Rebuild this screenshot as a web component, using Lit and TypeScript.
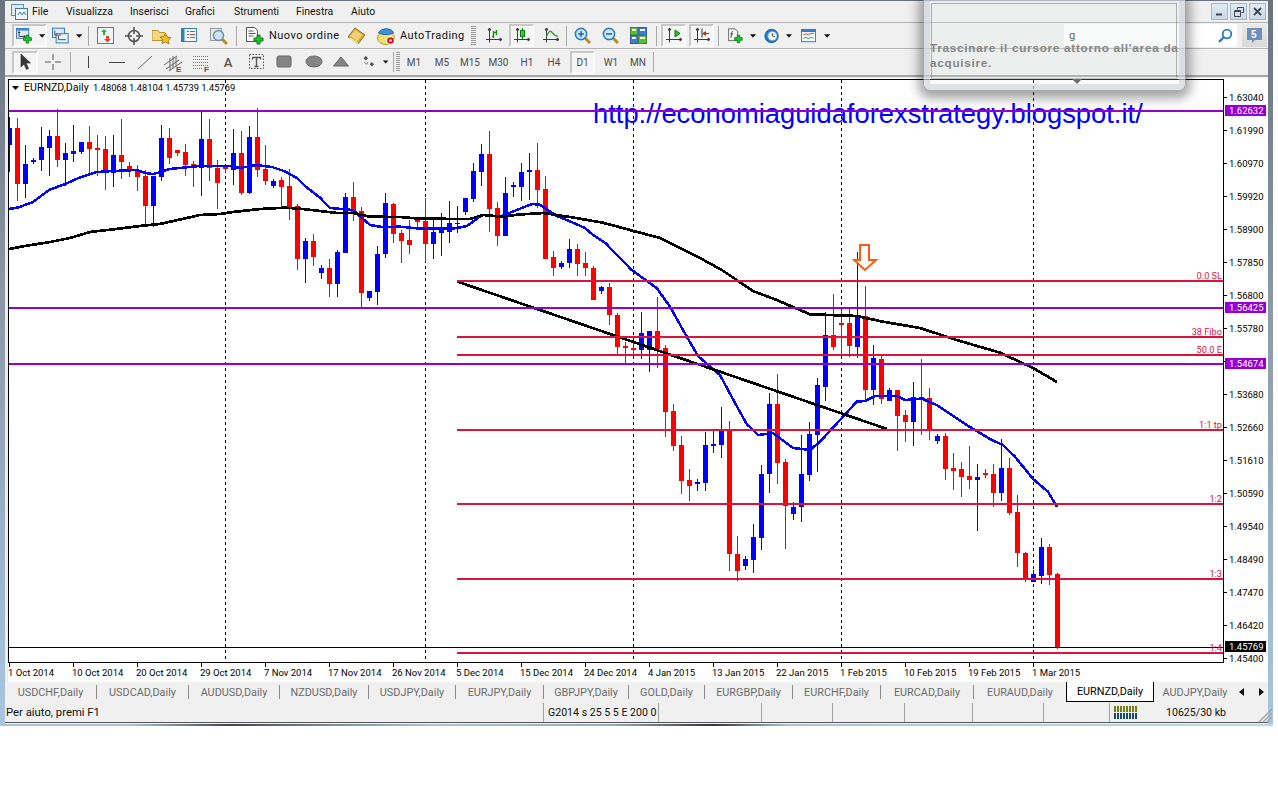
import { LitElement, html, svg, css } from "lit";
import { customElement } from "lit/decorators.js";

type C = [number, number, number, number, string];
const A: C[] = [[50,84,135,215,"b"],[54,84,251,302,"r"],[135,192,251,294,"b"],[174,180,186,191,"b"],[81,141,180,213,"b"],[90,108,144,228,"b"],[27,108,180,201,"r"],[129,159,180,258,"b"],[75,153,162,186,"b"],[126,126,156,162,"b"],[78,126,147,222,"r"],[105,144,150,228,"r"],[108,147,219,270,"r"],[105,165,219,261,"b"],[57,165,186,237,"r"],[186,198,210,231,"r"],[195,210,231,273,"r"],[210,228,318,378,"r"],[228,228,318,381,"b"],[75,114,231,243,"b"],[84,114,174,192,"r"],[150,150,159,168,"r"],[132,156,195,228,"r"],[183,192,198,261,"r"],[36,117,204,288,"b"],[57,117,204,243,"r"],[180,204,249,327,"r"],[195,201,207,216,"r"],[87,159,210,255,"b"],[93,159,279,285,"r"],[78,111,279,282,"b"],[24,111,210,231,"r"],[135,207,243,255,"r"],[237,243,258,264,"b"],[231,240,261,324,"r"],[207,258,324,360,"r"],[312,318,477,510,"r"],[414,423,477,549,"b"],[402,423,471,498,"r"]];
const B: C[] = [[495,504,519,537,"b"],[477,504,552,591,"r"],[450,456,552,591,"b"],[279,291,459,459,"b"],[246,291,336,363,"r"],[321,333,579,621,"r"],[573,573,594,603,"b"],[438,462,576,615,"b"],[279,309,462,474,"b"],[309,312,402,429,"r"],[390,399,423,489,"r"],[360,420,435,462,"r"],[354,357,366,384,"r"],[294,363,432,486,"r"],[351,396,432,477,"b"],[339,387,399,468,"b"],[303,369,396,429,"b"],[318,369,372,399,"b"],[294,294,336,345,"b"],[189,213,297,306,"b"],[132,162,216,258,"b"],[93,162,327,396,"r"],[306,324,408,438,"r"],[231,279,408,408,"b"],[246,255,261,291,"b"],[189,216,261,303,"b"],[159,210,216,300,"b"],[129,210,270,324,"r"],[228,267,477,477,"r"],[453,471,504,528,"r"],[483,489,501,507,"b"],[417,447,489,504,"b"],[432,447,492,528,"r"],[456,489,504,528,"r"],[498,504,600,600,"r"],[558,561,573,582,"b"],[549,561,645,675,"r"],[639,645,741,765,"r"]];
const D: C[] = [[216,228,234,282,"r"],[219,234,240,255,"r"],[126,189,240,267,"b"],[183,183,240,306,"b"],[81,183,237,294,"r"],[225,234,426,501,"r"],[402,423,528,543,"r"],[498,525,633,672,"r"],[597,630,648,693,"r"],[627,636,642,663,"b"],[486,525,639,663,"b"],[483,522,528,549,"b"],[411,483,525,564,"b"],[453,480,852,903,"r"],[798,852,903,933,"r"],[858,867,888,900,"b"],[762,801,870,909,"b"],[585,612,804,840,"b"],[369,402,612,669,"b"],[312,402,579,642,"r"],[567,576,708,837,"r"],[696,711,732,750,"b"],[495,612,711,756,"b"],[456,492,615,633,"b"],[324,345,495,606,"b"],[126,195,351,393,"b"],[72,195,231,240,"r"],[120,159,165,258,"r"],[117,159,228,261,"r"],[-54,138,231,264,"b"],[48,138,360,390,"r"],[225,264,360,405,"b"],[258,267,387,402,"r"],[354,360,393,393,"b"],[360,360,438,543,"r"]];
const E: C[] = [[210,225,246,306,"r"],[126,171,246,318,"b"],[57,171,177,285,"r"],[144,174,270,300,"r"],[282,288,303,312,"b"],[279,288,387,420,"r"],[339,384,393,450,"r"],[366,387,411,471,"r"],[318,408,420,447,"r"],[372,411,420,573,"b"],[387,399,405,414,"r"],[372,402,459,501,"r"],[297,384,459,483,"b"],[354,384,519,525,"r"],[465,516,639,681,"r"],[636,639,720,726,"r"],[690,702,726,726,"b"],[594,621,708,732,"b"],[612,621,705,735,"r"],[699,702,924,927,"r"]];

const toY = (rows: C[], off: number) => rows.map(r => [off + r[0] / 3, off + r[1] / 3, off + r[2] / 3, off + r[3] / 3, r[4]] as [number, number, number, number, string]);
const candles = [...toY(A, 100), ...toY(B, 100), ...toY(D, 270), ...toY(E, 340)];

const blueMA = "9,209 18,207.5 33,202 49,190 57,187 65,184 81,177 97,172 113,171 137,170 145,173 153,174 161,172 169,169 180,168 200,166 230,166 240,168 256,165 272,167 284,171 297,178 305,186 320,197.7 330,208 353,210 370,225 382,227 400,226.7 420,228.7 453,228.7 467,226 482,215 500,216.7 520,208.7 532,204 540,204.7 557,216 573,222.7 585,228 593,235 605,242.7 620,258 631.7,270 656.7,288 670,306.7 683,330 698,356 720,375 735,403 746.7,424 758,435 773,433 793,448 810,450 820,441.7 840,420 856.7,401.7 865,401 875,396 896.7,396 905,400 921.7,398.5 936.7,405 970,427 991.7,440 1003,445 1015,456.7 1033,479 1048,491.7 1057,507";
const blackMA = "9,249 25,246 50,242 70,238 90,232 116,229 140,226 160,224 200,215 220,214 233,212 260,209 285,207.7 300,208.7 320,211 337,213 353,213 370,216.7 400,217 420,218.7 470,219 483,215 503,216.7 517,214.7 543,213 570,217 603,222.7 640,232.7 660,238 700,258 721.7,270 736.7,280 753,291 776.7,300 810,314.3 856.7,316 883,321.7 920,328 956.7,340 1000,352.7 1033,368 1057,382";

const priceAxis = ["1.63040","1.61990","1.60970","1.59920","1.58900","1.57850","1.56800","1.55780","","1.53680","1.52660","1.51610","1.50590","1.49540","1.48490","1.47470","1.46420","1.45400"];
const dates = ["1 Oct 2014","10 Oct 2014","20 Oct 2014","29 Oct 2014","7 Nov 2014","17 Nov 2014","26 Nov 2014","5 Dec 2014","15 Dec 2014","24 Dec 2014","4 Jan 2015","13 Jan 2015","22 Jan 2015","1 Feb 2015","10 Feb 2015","19 Feb 2015","1 Mar 2015"];
const fibs: [number, string][] = [[280,"0.0 SL"],[336,"38 Fibo"],[354,"50.0 E"],[429,"1:1 tp"],[503,"1:2"],[578,"1:3"],[652,"1:4"]];
const tags: [number, string, string][] = [[105,"1.62632","#9400d3"],[302,"1.56425","#9400d3"],[358,"1.54674","#9400d3"],[641,"1.45769","#000"]];

const caret = html`<svg class="caret" width="7" height="4" viewBox="0 0 7 4"><path d="M0 0h7L3.5 4z" fill="#111"/></svg>`;
const s18 = (c: unknown, w = 18, h = 18) => html`<svg width=${w} height=${h} viewBox="0 0 ${w} ${h}">${c}</svg>`;
const plus = (x: number, y: number) => svg`<path transform="translate(${x} ${y})" d="M3.5 .5h3v3h3v3h-3v3h-3v-3h-3v-3h3z" fill="#22c52e" stroke="#0b7d18"/>`;
const axes = svg`<path d="M4.5 2v13.5M1 12.5h15M4.5 1l-1.5 2h3zM17 12.5l-2-1.5v3z" stroke="#3c3c3c" fill="#3c3c3c" stroke-width="1"/>`;
const lens = (sign: string) => svg`<path d="M11 11l5 5" stroke="#b98f1c" stroke-width="3"/><circle cx="7" cy="7" r="5.6" fill="#cfe6f8" stroke="#2d7fc0" stroke-width="1.6"/><path d=${sign} stroke="#1f6aa8" stroke-width="1.6"/>`;

const ic: Record<string, unknown> = {
  chartAdd: s18(svg`<rect x=".5" y=".5" width="14" height="11" fill="#dcebfa" stroke="#2a6fb0"/><rect x=".5" y=".5" width="14" height="2.400" fill="#3f8bd0"/><path d="M3.500 4v5.500h7M3.500 4l-1 1h2zM10.500 9.500l-1-1v2z" stroke="#333" fill="none"/>${plus(8, 7.5)}`),
  profile: s18(svg`<rect x=".5" y=".5" width="13" height="10" fill="#dcebfa" stroke="#2a6fb0"/><rect x="4.500" y="6.500" width="13" height="10" fill="#eaf3fc" stroke="#2a6fb0"/><path d="M3 3v5h7M7 9v4h8" stroke="#444" fill="none"/>`),
  market: s18(svg`<rect x=".5" y=".5" width="16" height="16" fill="#eef5fc" stroke="#3a86c8"/><path d="M6 8V5H4l3-3 3 3H8v3z" fill="#25b52f"/><path d="M9 9v3H7l3.500 3.500L14 12h-2V9z" fill="#e0492a"/>`),
  cross: s18(svg`<circle cx="9" cy="9" r="5.500" fill="none" stroke="#555" stroke-width="1.600"/><path d="M9 0v7M9 11v7M0 9h7M11 9h7" stroke="#555" stroke-width="1.600"/>`),
  folder: s18(svg`<path d="M0 3.500h6l1.500 2H13v8H0z" fill="#f3d77c" stroke="#bb9431"/><path d="M13.500 6.500l1.800 3.600 3.700.5-2.700 2.600.7 3.800-3.500-1.900L10 16.500l.7-3.800L8 10.100l3.700-.5z" fill="#efbf2a" stroke="#a9801a"/>`, 19),
  nav: s18(svg`<rect x=".5" y="1.500" width="15" height="13" fill="#f6fafe" stroke="#2f7fc4"/><rect x=".5" y="1.500" width="3" height="13" fill="#2f7fc4"/><path d="M6 4.500h2M9 4.500h5M6 7.500h2M9 7.500h5M6 10.500h2M9 10.500h5" stroke="#c44" stroke-width="1"/>`),
  tester: s18(svg`<rect x=".5" y="1.500" width="11" height="12" fill="#e8e8e8" stroke="#9a9a9a"/><path d="M12 12l5 5" stroke="#b98f1c" stroke-width="3"/><circle cx="8.500" cy="8.500" r="5" fill="#cfe3f4" stroke="#6b93b5" stroke-width="1.500"/>`),
  order: s18(svg`<path d="M.5 .5h8l3 3v11H.5z" fill="#fff" stroke="#555"/><path d="M2.500 4h5M2.500 6.500h7M2.500 9h5" stroke="#555"/>${plus(7.5, 7.5)}`),
  book: s18(svg`<path d="M0 10L7 1l10 7-7 9z" fill="#d9a93a" stroke="#8f6b14"/><path d="M2 9L7.500 3l7 5-5.500 6.500z" fill="#efd077"/><path d="M1.500 11l8.500 5.500" stroke="#fff2c0" stroke-width="1.300"/>`),
  auto: s18(svg`<ellipse cx="9" cy="11" rx="8.500" ry="6.500" fill="#f6df6b" stroke="#b4952c"/><path d="M1.500 6C3 1 15 0 16.500 6 12 8 6 8 1.500 6z" fill="#3a94d6" stroke="#2369a8"/><circle cx="13.500" cy="13.500" r="4.300" fill="#fff"/><circle cx="13.500" cy="13.500" r="3.300" fill="#d3120f"/><circle cx="13.500" cy="13.500" r="1.200" fill="#fff"/>`),
  bars: s18(svg`${axes}<path d="M8.500 4v7M7 9.500h1.500M8.500 5.500H11M11.500 3v5" stroke="#1f8e1f" stroke-width="1.400" fill="none"/>`),
  candle: s18(svg`${axes}<path d="M9.500 1v11" stroke="#0c7d0c"/><rect x="7.500" y="3.500" width="4" height="6" fill="#2fcf2f" stroke="#0c7d0c"/>`),
  line: s18(svg`${axes}<path d="M4.500 9.500C6.500 4.500 8 3 10 5.500s3 3.500 6 4" fill="none" stroke="#3aa03a" stroke-width="1.400"/>`),
  zoomIn: s18(lens("M4 7h6M7 4v6")),
  zoomOut: s18(lens("M4 7h6")),
  tile: s18(svg`<rect x=".5" y=".5" width="7.500" height="7.500" fill="#5cb83a" stroke="#3f8b25"/><rect x="8.500" y=".5" width="8" height="7.500" fill="#3f7fd0" stroke="#2a5fa8"/><rect x=".5" y="8.500" width="7.500" height="8" fill="#3f7fd0" stroke="#2a5fa8"/><rect x="8.500" y="8.500" width="8" height="8" fill="#5cb83a" stroke="#3f8b25"/><path d="M2 3h4M10 3h5M2 11h4M10 11h5" stroke="#fff" stroke-width="2"/>`),
  shift: s18(svg`${axes}<path d="M10 3v7l5-3.500z" fill="#2cc02c" stroke="#117a11"/>`),
  scroll: s18(svg`${axes}<path d="M9 1.500v9" stroke="#333"/><path d="M16 6h-3V4l-4 2.500L13 9V7h3z" fill="#c0280f"/>`),
  ind: s18(svg`<path d="M.5 .5h8l3 3v11H.5z" fill="#f2f2f2" stroke="#555"/><path d="M6 3.500C4.500 3.500 4.500 5 4.200 7L3.500 11M2.800 6.500H6" stroke="#333" fill="none"/>${plus(7.5, 7.5)}`),
  clock: s18(svg`<circle cx="9" cy="9" r="8" fill="#1e78c8" stroke="#145a9a"/><circle cx="10" cy="9" r="5.500" fill="#f4f4f4" stroke="#7aa8cf"/><path d="M10 5.500V9l3 1" stroke="#333" fill="none"/>`),
  tmpl: s18(svg`<rect x=".5" y="1.500" width="16" height="14" fill="#f5fafe" stroke="#2a6fb0"/><rect x=".5" y="1.500" width="16" height="3" fill="#2f7fc4"/><path d="M2.500 8l3-1.500 3 1 3-1.500 3 .5" stroke="#c0392b" fill="none"/><path d="M2.500 12l3-1.500 3 1.500 3-1.500 3 1" stroke="#2e9c2e" fill="none"/>`),
  arrow: s18(svg`<path d="M5 1v13l3-3 2.500 5.500 2-1L10 10h4.500z" fill="#3a3a3a" stroke="#222" stroke-width=".6"/>`),
  thinCross: s18(svg`<path d="M9 1v6M9 11v6M1 9h6M11 9h6" stroke="#555"/>`),
  vert: s18(svg`<path d="M9.500 3v12" stroke="#444"/>`),
  horz: s18(svg`<path d="M1 9.500h16" stroke="#444"/>`),
  diag: s18(svg`<path d="M2 16L16 3" stroke="#666"/>`),
  chan: s18(svg`<g transform="translate(0 4)"><path d="M0 11l13-9M2 15L15 6M5 17L18 8M6 4v12M9 2v12M12 3v10" stroke="#666" fill="none"/><text x="12" y="18" font-family="Liberation Sans, sans-serif" font-weight="700" font-size="8" fill="#555">E</text></g>`, 19, 24),
  fib: s18(svg`<g transform="translate(0 4)"><path d="M0 2.500h15M0 5.500h15M0 8.500h15M0 11.500h15M0 14.500h10" stroke="#777" stroke-dasharray="1 1"/><text x="11" y="18" font-family="Liberation Sans, sans-serif" font-weight="700" font-size="8" fill="#555">F</text></g>`, 19, 24),
  label: s18(svg`<rect x="1.500" y="1.500" width="14" height="14" fill="none" stroke="#555" stroke-dasharray="1.500 1.500"/><path d="M4.500 4.500h8v2M8.500 4.500v9M6.500 13.500h4M4.500 6.500v-2" stroke="#555" stroke-width="1.400" fill="none"/>`),
  rect: s18(svg`<rect x="1" y="3" width="14" height="11" rx="1.500" fill="#858585" stroke="#666"/>`),
  ell: s18(svg`<ellipse cx="9" cy="8.500" rx="8" ry="5.500" fill="#858585" stroke="#666"/>`),
  tri: s18(svg`<path d="M9 4l7.500 9h-15z" fill="#858585" stroke="#666"/>`),
  marks: s18(svg`<path d="M5 1l3 3-3 3-3-3zM13 9l3 3-3 3-3-3z" fill="#555"/><path d="M3 9l3 3 2-3" stroke="#555" fill="none"/>`),
};

type Item = { a: number; b: number; k?: string; t?: string; p?: boolean; car?: boolean; cls?: string };
const row1: Item[] = [
  { a: 12, b: 47, k: "chartAdd", p: true, car: true, cls: "wide" }, { a: 50, b: 82, k: "profile", car: true, cls: "wide" }, { a: 88, b: 89, cls: "sep" },
  { a: 96, b: 116, k: "market" }, { a: 124, b: 144, k: "cross" }, { a: 150, b: 172, k: "folder" }, { a: 180, b: 200, k: "nav" }, { a: 208, b: 230, k: "tester" }, { a: 236, b: 237, cls: "sep" },
  { a: 244, b: 342, k: "order", t: "Nuovo ordine", cls: "wide" }, { a: 347, b: 367, k: "book" }, { a: 375, b: 466, k: "auto", t: "AutoTrading", cls: "wide" }, { a: 471, b: 476, cls: "grip" },
  { a: 484, b: 504, k: "bars" }, { a: 509, b: 534, k: "candle", p: true }, { a: 540, b: 561, k: "line" }, { a: 566, b: 567, cls: "sep" },
  { a: 573, b: 593, k: "zoomIn" }, { a: 601, b: 621, k: "zoomOut" }, { a: 629, b: 649, k: "tile" }, { a: 656, b: 657, cls: "sep" },
  { a: 661, b: 686, k: "shift", p: true }, { a: 689, b: 714, k: "scroll", p: true }, { a: 718, b: 719, cls: "sep" },
  { a: 726, b: 756, k: "ind", car: true, cls: "wide" }, { a: 762, b: 792, k: "clock", car: true, cls: "wide" }, { a: 799, b: 830, k: "tmpl", car: true, cls: "wide" },
];
const row2: Item[] = [
  { a: 12, b: 38, k: "arrow", p: true }, { a: 43, b: 63, k: "thinCross" }, { a: 70, b: 71, cls: "sep" }, { a: 78, b: 98, k: "vert" }, { a: 107, b: 127, k: "horz" }, { a: 135, b: 155, k: "diag" }, { a: 163, b: 183, k: "chan" }, { a: 192, b: 212, k: "fib" },
  { a: 218, b: 238, t: "A", cls: "big" }, { a: 247, b: 267, k: "label" }, { a: 275, b: 295, k: "rect" }, { a: 304, b: 324, k: "ell" }, { a: 331, b: 351, k: "tri" }, { a: 360, b: 388, k: "marks", car: true, cls: "wide" }, { a: 393, b: 394, cls: "sep" }, { a: 396, b: 400, cls: "grip" },
  { a: 403, b: 425, t: "M1" }, { a: 431, b: 453, t: "M5" }, { a: 458, b: 482, t: "M15" }, { a: 486, b: 511, t: "M30" }, { a: 516, b: 538, t: "H1" }, { a: 543, b: 565, t: "H4" }, { a: 570, b: 595, t: "D1", p: true }, { a: 598, b: 624, t: "W1" }, { a: 627, b: 649, t: "MN" }, { a: 653, b: 654, cls: "sep" },
];
const menu: [number, string][] = [[32,"File"],[66,"Visualizza"],[130,"Inserisci"],[185,"Grafici"],[234,"Strumenti"],[296,"Finestra"],[351,"Aiuto"]];
const tabs: [number, number, string][] = [[5,97,"USDCHF,Daily"],[97,189,"USDCAD,Daily"],[189,280,"AUDUSD,Daily"],[280,369,"NZDUSD,Daily"],[369,456,"USDJPY,Daily"],[456,544,"EURJPY,Daily"],[544,629,"GBPJPY,Daily"],[629,705,"GOLD,Daily"],[705,793,"EURGBP,Daily"],[793,881,"EURCHF,Daily"],[881,974,"EURCAD,Daily"],[974,1066,"EURAUD,Daily"],[1066,1154,"EURNZD,Daily"],[1154,1236,"AUDJPY,Daily"]];
const cells: [number, string][] = [[115,"G2014 s 25 5 5 E 200 0"],[103,""],[71,""],[72,""],[68,""],[71,""],[66,""]];

@customElement("app-root")
export class AppRoot extends LitElement {
  static styles = css`
    :host { display: block; width: 1278px; height: 802px; background: #fff; position: relative; overflow: hidden; font-family: Roboto, "Liberation Sans", sans-serif; }
    .win { width: 1273px; height: 726px; box-sizing: border-box; padding: 1px 5px 0; display: flex; flex-direction: column; background: linear-gradient(#69737e, #8a97a4 40%, #a9c6e0); }
    .body { flex: 1; display: flex; flex-direction: column; background: #f0f0f0; min-height: 0; }
    .menu { height: 21px; display: flex; align-items: center; font-size: 10.4px; color: #111; position: relative; }
    .logo { width: 27px; display: flex; justify-content: center; padding-left: 3px; box-sizing: border-box; }
    .mi { display: block; white-space: nowrap; }
    .ctrls { margin-left: auto; margin-right: 2px; display: flex; gap: 2px; }
    .ctl { width: 17px; height: 17px; box-sizing: border-box; border: 1px solid #a4b7c9; background: linear-gradient(#dfeaf4, #c9d9e8); display: flex; align-items: center; justify-content: center; }
    .row { display: flex; align-items: center; box-sizing: border-box; border-top: 1px solid #b4b4b4; }
    .r1 { height: 26px; }
    .r2 { height: 27px; font-size: 10px; color: #4c4c4c; }
    .spacer { height: 3px; box-sizing: border-box; border-top: 2px solid #a6a6a6; }
    .it { height: 23px; box-sizing: border-box; display: flex; align-items: center; justify-content: center; flex: none; }
    .it.p { border: 2px solid; border-color: #c8c8c8 #fafafa #fafafa #c8c8c8; background: #f5f5f5; }
    .it.wide { justify-content: flex-start; gap: 5px; padding-left: 2px; font-size: 11px; letter-spacing: .45px; color: #111; }
    .it.sep { background: #a9a9a9; height: 20px; }
    .it.grip { height: 20px; background: repeating-linear-gradient(#999 0 1px, transparent 1px 2px); }
    .it.big { font-size: 13px; font-weight: 500; color: #555; }
    .caret { margin-left: 2px; }
    .search { margin-left: auto; width: 173px; height: 23px; background: #fff; display: flex; align-items: center; justify-content: space-between; box-sizing: border-box; padding: 0 4px 0 5px; font-size: 11px; color: #444; }
    .comm { width: 25px; height: 23px; margin: 0 1px 0 5px; background: linear-gradient(#e9e9e9, #d9d9d9); display: flex; align-items: center; justify-content: center; }
    .chart { display: block; flex: none; }
    .tabs { height: 20px; display: flex; background: #f0f0f0; font-size: 10.85px; color: #6c6c6c; position: relative; }
    .tab { box-sizing: border-box; display: flex; align-items: center; justify-content: center; border-right: 1px solid #8b8b8b; height: 14px; margin-top: 3px; white-space: nowrap; flex: none; }
    .tab.last { border-right: 0; }
    .tab.on { height: 20px; margin-top: 0; background: #fff; color: #000; border: 1px solid #000; border-top: 0; }
    .nav { margin-left: auto; display: flex; gap: 15px; align-items: center; margin-right: 4px; }
    .status { height: 21px; display: flex; align-items: center; font-size: 10.6px; color: #111; box-sizing: border-box; border-bottom: 1px solid #555; }
    .cell { box-sizing: border-box; height: 19px; display: flex; align-items: center; border-right: 1px solid #a2a2a2; padding-left: 4px; white-space: nowrap; overflow: hidden; flex: none; }
    .first { width: 539px; padding-left: 1px; font-size: 11.3px; }
    .net { width: 45px; height: 19px; display: flex; align-items: center; padding-left: 4px; box-sizing: border-box; flex: none; }
    .mem { padding-left: 11px; white-space: nowrap; }
    .gripc { position: absolute; right: 5px; top: 707px; }
    .edge { height: 2px; margin: 0 -5px; background: linear-gradient(90deg, #a9c6e0 0, #a9c6e0 10%, #445 18%, #7a8a9a 26%, #a9c6e0 34%, #9ab 48%, #334 56%, #a9c6e0 62%, #c0d6ea 100%); flex: none; }
    .popup { position: absolute; left: 923px; top: -6px; width: 263px; height: 97px; box-sizing: border-box; border-radius: 7px; border: 1px solid rgba(110,120,130,.6); background: rgba(225,228,232,.2); box-shadow: 0 3px 12px 4px rgba(0,0,0,.38), inset 0 0 0 6px rgba(205,212,218,.6); }
    .pframe { position: absolute; left: 7px; right: 8px; top: 8px; height: 76px; box-sizing: border-box; border: 1px solid rgba(120,120,120,.55); border-bottom-color: rgba(140,140,140,.5); }
    .ptext { position: absolute; left: 6px; top: 45px; width: 258px; font: 700 11.7px/15px "Liberation Sans", sans-serif; letter-spacing: .75px; color: #858585; }
    .ptri { position: absolute; left: 148px; top: 84px; width: 0; height: 0; border: 5px solid transparent; border-top-color: #6e6e6e; border-bottom: 0; }
  `;

  private renderItems(items: Item[]) {
    let x = 5;
    return items.map(it => {
      const ml = it.a - x;
      x = it.b;
      const cl = `it ${it.cls ?? ""} ${it.p ? "p" : ""}`;
      return html`<div class=${cl} style="margin-left:${ml}px;width:${it.b - it.a}px">${it.k ? ic[it.k] : ""}${it.t ?? ""}${it.car ? caret : ""}</div>`;
    });
  }

  private chart() {
    const bars = candles.map((c, k) => {
      const col = c[4] === "b" ? "#0000ff" : "#ff0000";
      const x = 9 + 8 * k;
      const bx = Math.max(9, x - 2);
      const bw = x + 3 - bx;
      return svg`<rect x=${x} y=${c[0]} width="1" height=${c[3] - c[0]} fill=${col}/><rect x=${bx} y=${c[1]} width=${bw} height=${Math.max(1, c[2] - c[1])} fill=${col}/>`;
    });
    return html`<svg class="chart" width="1263" height="604" viewBox="5 78 1263 604" font-family="Roboto, 'Liberation Sans', sans-serif">
      <rect x="5" y="78" width="1263" height="604" fill="#fff"/>
      <rect x="5" y="78" width="3" height="604" fill="#ececec"/>
      <g shape-rendering="crispEdges">
        ${[225, 425, 633, 841, 1033].map(x => svg`<path d="M${x + .5} 80V662" stroke="#000" stroke-dasharray="3 3"/>`)}
      </g>
      <text x="593" y="123" font-family="'Liberation Sans', sans-serif" font-size="27.35" fill="#0000ff">http://economiaguidaforexstrategy.blogspot.it/</text>
      <g shape-rendering="crispEdges">${bars}</g>
      <polyline points=${blueMA} fill="none" stroke="#0000ff" stroke-width="2.5" stroke-linejoin="round" shape-rendering="crispEdges"/>
      <polyline points=${blackMA} fill="none" stroke="#000" stroke-width="2.7" stroke-linejoin="round" shape-rendering="crispEdges"/>
      <path d="M457 281.500L887 429" stroke="#000" stroke-width="2.700" shape-rendering="crispEdges"/>
      <g shape-rendering="crispEdges">
        ${fibs.map(f => svg`<rect x="457" y=${f[0]} width="766" height="2" fill="#dc143c"/>`)}
        ${[110, 307, 363].map(y => svg`<rect x="9" y=${y} width="1214" height="2" fill="#9400d3"/>`)}
        <rect x="9" y="647" width="1214" height="1" fill="#000"/>
        <rect x="8.500" y="79.500" width="1215" height="583" fill="none" stroke="#000"/>
        ${priceAxis.map((_, i) => svg`<rect x="1224" y=${97 + 33 * i} width="3" height="1" fill="#000"/>`)}
        ${dates.map((_, i) => svg`<rect x=${9 + 64 * i} y="663" width="1" height="4" fill="#000"/>`)}
      </g>
      <path d="M860 245h9v15h7l-11 10-11-10h6z" fill="#fff" stroke="#ff5a10" stroke-width="2"/>
      <g font-size="9.200" fill="#dc143c" text-anchor="end">${fibs.map(f => svg`<text x="1222" y=${f[0] - 1.5}>${f[1]}</text>`)}</g>
      <g font-size="9.500" fill="#000">
        ${priceAxis.map((p, i) => svg`<text x="1229" y=${100.5 + 33 * i}>${p}</text>`)}
        ${dates.map((d, i) => svg`<text x=${8 + 64 * i} y="675.500">${d}</text>`)}
      </g>
      <g shape-rendering="crispEdges">${tags.map(t => svg`<rect x="1225" y=${t[0]} width="41" height="11" fill=${t[2]}/>`)}</g>
      <g font-size="9.500" fill="#fff">${tags.map(t => svg`<text x="1229" y=${t[0] + 9}>${t[1]}</text>`)}</g>
      <path d="M12 86h7l-3.500 4z" fill="#000"/>
      <text x="24" y="91" font-size="10.600" fill="#000">EURNZD,Daily</text>
      <text x="93" y="91" font-size="9.300" fill="#000">1.48068 1.48104 1.45739 1.45769</text>
    </svg>`;
  }

  render() {
    return html`
      <div class="win">
        <div class="body">
          <div class="menu">
            <div class="logo">${s18(svg`<rect x=".5" y="1.500" width="12" height="11" fill="#dce9f5" stroke="#5d8fc0"/><rect x="4.500" y="5.500" width="12" height="11" fill="#f0f6fc" stroke="#3c78b4"/><path d="M7 12l2-3 2 3 2-3 2 3" stroke="#3c78b4" fill="none"/>`)}</div>
            ${menu.map((m, i) => {
              const next = i + 1 < menu.length ? menu[i + 1][0] : m[0] + 40;
              return html`<span class="mi" style="width:${next - m[0]}px">${m[1]}</span>`;
            })}
            <div class="ctrls">
              <div class="ctl"><svg width="9" height="9" viewBox="0 0 9 9"><path d="M1 7.500h6" stroke="#445" stroke-width="2"/></svg></div>
              <div class="ctl"><svg width="10" height="10" viewBox="0 0 10 10"><path d="M3.500 2.500V.5h6v5H7.500M.5 3.500h6v6h-6zM.5 4.500h6" stroke="#445" fill="none"/></svg></div>
              <div class="ctl"><svg width="9" height="9" viewBox="0 0 9 9"><path d="M1 1l7 7M8 1l-7 7" stroke="#445" stroke-width="1.800"/></svg></div>
            </div>
          </div>
          <div class="row r1">
            ${this.renderItems(row1)}
            <div class="search"><span>g</span><svg width="16" height="16" viewBox="0 0 16 16"><circle cx="10" cy="6" r="4.300" fill="#fff" stroke="#2b78c2" stroke-width="1.800"/><path d="M7 9l-5 5" stroke="#2b78c2" stroke-width="2.400"/></svg></div>
            <div class="comm"><svg width="17" height="17" viewBox="0 0 17 17"><path d="M1 1h15v12H9l-3 3v-3H1z" fill="#6f8eb8"/><text x="5" y="11" font-family="Liberation Sans, sans-serif" font-weight="700" font-size="10" fill="#fff">5</text></svg></div>
          </div>
          <div class="row r2">${this.renderItems(row2)}</div>
          <div class="spacer"></div>
          ${this.chart()}
          <div class="tabs">
            ${tabs.map((t, i) => html`<div class="tab ${i === 12 ? "on" : ""} ${i === 13 || i === 11 ? "last" : ""}" style="width:${t[1] - t[0]}px">${t[2]}</div>`)}
            <div class="nav">
              <svg width="5" height="8" viewBox="0 0 5 8"><path d="M5 0v8L0 4z" fill="#111"/></svg>
              <svg width="5" height="8" viewBox="0 0 5 8"><path d="M0 0v8l5-4z" fill="#111"/></svg>
            </div>
          </div>
          <div class="status">
            <div class="cell first">Per aiuto, premi F1</div>
            ${cells.map(c => html`<div class="cell" style="width:${c[0]}px">${c[1]}</div>`)}
            <div class="net"><svg width="25" height="13" viewBox="0 0 25 13">${Array.from({ length: 8 }, (_, n) => svg`<rect x=${n * 3} y="0" width="2" height="6" fill="#6f7f12"/><rect x=${n * 3} y="7" width="2" height="6" fill="#174d6b"/>`)}</svg></div>
            <div class="mem">10625/30 kb</div>
          </div>
        </div>
        <div class="edge"></div>
      </div>
      <svg class="gripc" width="16" height="16" viewBox="0 0 16 16"><path d="M15 2L2 15M15 6L6 15M15 10L10 15" stroke="#a5a5a5" stroke-width="1.500"/></svg>
      <div class="popup">
        <div class="pframe"></div>
        <div class="ptext">Trascinare il cursore attorno all'area da acquisire.</div>
        <div class="ptri"></div>
      </div>
    `;
  }
}
